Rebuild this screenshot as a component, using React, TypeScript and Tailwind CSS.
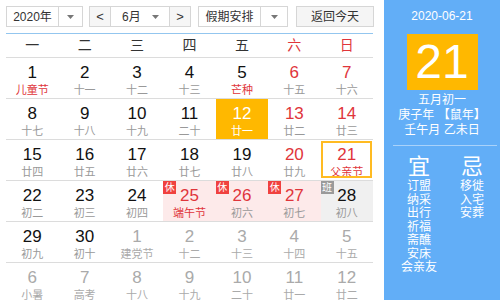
import React from "react";

type Cell = {
  d: string;
  l: string;
  red?: boolean;
  lred?: boolean;
  dim?: boolean;
  today?: boolean;
  sel?: boolean;
  badge?: "休" | "班";
  bg?: "pink" | "gray";
};

const rows: Cell[][] = [
  [
    { d: "1", l: "儿童节", lred: true },
    { d: "2", l: "十一" },
    { d: "3", l: "十二" },
    { d: "4", l: "十三" },
    { d: "5", l: "芒种", lred: true },
    { d: "6", l: "十五", red: true },
    { d: "7", l: "十六", red: true },
  ],
  [
    { d: "8", l: "十七" },
    { d: "9", l: "十八" },
    { d: "10", l: "十九" },
    { d: "11", l: "二十" },
    { d: "12", l: "廿一", today: true },
    { d: "13", l: "廿二", red: true },
    { d: "14", l: "廿三", red: true },
  ],
  [
    { d: "15", l: "廿四" },
    { d: "16", l: "廿五" },
    { d: "17", l: "廿六" },
    { d: "18", l: "廿七" },
    { d: "19", l: "廿八" },
    { d: "20", l: "廿九", red: true },
    { d: "21", l: "父亲节", red: true, lred: true, sel: true },
  ],
  [
    { d: "22", l: "初二" },
    { d: "23", l: "初三" },
    { d: "24", l: "初四" },
    { d: "25", l: "端午节", red: true, lred: true, badge: "休", bg: "pink" },
    { d: "26", l: "初六", red: true, badge: "休", bg: "pink" },
    { d: "27", l: "初七", red: true, badge: "休", bg: "pink" },
    { d: "28", l: "初八", badge: "班", bg: "gray" },
  ],
  [
    { d: "29", l: "初九" },
    { d: "30", l: "初十" },
    { d: "1", l: "建党节", dim: true },
    { d: "2", l: "十二", dim: true },
    { d: "3", l: "十三", dim: true },
    { d: "4", l: "十四", dim: true },
    { d: "5", l: "十五", dim: true },
  ],
  [
    { d: "6", l: "小暑", dim: true },
    { d: "7", l: "高考", dim: true },
    { d: "8", l: "十八", dim: true },
    { d: "9", l: "十九", dim: true },
    { d: "10", l: "二十", dim: true },
    { d: "11", l: "廿一", dim: true },
    { d: "12", l: "廿二", dim: true },
  ],
];

const weekdays = ["一", "二", "三", "四", "五", "六", "日"];

function Arrow() {
  return (
    <svg width="7" height="4" viewBox="0 0 7 4">
      <path d="M0 0 L7 0 L3.5 4 Z" fill="#777" />
    </svg>
  );
}

function DayCell({ c }: { c: Cell }) {
  let numColor = "text-[#111]";
  let lunColor = "text-[#999]";
  if (c.red) numColor = "text-[#e0353b]";
  if (c.lred) lunColor = "text-[#e0353b]";
  if (c.dim) {
    numColor = "text-[#aaa]";
    lunColor = "text-[#aaa]";
  }
  let bg = "";
  if (c.today) {
    bg = "bg-[#ffb800]";
    numColor = "text-white";
    lunColor = "text-white";
  }
  if (c.bg === "pink") bg = "bg-[#fdeaea]";
  if (c.bg === "gray") bg = "bg-[#f0f0f0]";
  return (
    <div className={`relative h-[40px] flex flex-col items-center ${bg}`}>
      {c.sel && (
        <div className="absolute left-0 right-[1px] top-[1px] bottom-[2px] border-2 border-[#ffbb22]" />
      )}
      {c.badge && (
        <div
          className={`absolute left-0 top-0 w-[13px] h-[13px] flex items-center justify-center text-[10px] leading-none text-white ${
            c.badge === "休" ? "bg-[#f0413f]" : "bg-[#9a9a9a]"
          }`}
        >
          {c.badge}
        </div>
      )}
      <div className={`mt-[6px] text-[17px] leading-[18px] ${numColor}`}>{c.d}</div>
      <div className={`mt-[2px] text-[11px] leading-[13px] ${lunColor}`}>{c.l}</div>
    </div>
  );
}

export default function App() {
  return (
    <div
      className="w-[500px] h-[300px] overflow-hidden bg-white flex"
      style={{ fontFamily: '"Liberation Sans", "Noto Sans CJK SC", sans-serif' }}
    >
      <div className="w-[384px] pl-[6px] pt-[6px]">
        {/* header */}
        <div className="flex items-center h-[21px] text-[12px] text-[#333]">
          <div className="flex h-[21px] w-[77px] border border-[#d6d6d6]">
            <div className="w-[52px] flex items-center justify-center border-r border-[#d6d6d6]">2020年</div>
            <div className="flex-1 flex items-center justify-center">
              <Arrow />
            </div>
          </div>
          <div className="ml-[6px] flex h-[21px] w-[102px] border border-[#d6d6d6]">
            <div className="w-[21px] flex items-center justify-center border-r border-[#d6d6d6] bg-[#f6f6f6] text-[13px]">&lt;</div>
            <div className="flex-1 flex items-center">
              <span className="ml-[11px]">6月</span>
              <span className="ml-auto mr-[10px] flex">
                <Arrow />
              </span>
            </div>
            <div className="w-[21px] flex items-center justify-center border-l border-[#d6d6d6] bg-[#f6f6f6] text-[13px]">&gt;</div>
          </div>
          <div className="ml-[7px] flex h-[21px] w-[90px] border border-[#d6d6d6]">
            <div className="w-[62px] flex items-center justify-center border-r border-[#d6d6d6]">假期安排</div>
            <div className="flex-1 flex items-center justify-center">
              <Arrow />
            </div>
          </div>
          <div className="ml-[8px] flex h-[21px] w-[78px] items-center justify-center border border-[#d6d6d6] bg-[#f5f5f5]">
            返回今天
          </div>
        </div>
        <div className="mt-[6px] w-[367px] h-[1px] bg-[#93c6ef]" />
        {/* weekdays */}
        <div className="grid grid-cols-7 w-[367px] h-[24px] border-b border-[#dcdcdc] text-[14px]">
          {weekdays.map((w, i) => (
            <div
              key={w}
              className={`flex items-center justify-center ${i >= 5 ? "text-[#e0353b]" : "text-[#333]"}`}
            >
              {w}
            </div>
          ))}
        </div>
        {rows.map((r, ri) => (
          <div key={ri} className="grid grid-cols-7 w-[367px] border-b border-[#dcdcdc]">
            {r.map((c, ci) => (
              <DayCell key={ci} c={c} />
            ))}
          </div>
        ))}
      </div>
      <div className="w-[116px] h-[300px] bg-[#62aef7] text-white flex flex-col items-center">
        <div className="mt-[9px] text-[12px] leading-[14px]">2020-06-21</div>
        <div className="mt-[11px] w-[71px] h-[56px] bg-[#ffb800] flex items-center justify-center text-[48px] leading-none">
          21
        </div>
        <div className="mt-[3px] text-[12px] leading-[15px] flex flex-col items-center">
          <div>五月初一</div>
          <div>庚子年 【鼠年】</div>
          <div>壬午月 乙未日</div>
        </div>
        <div className="mt-[7px] ml-[6px] w-[104px] h-[1px] bg-[#a9d2fa]" />
        <div className="mt-[8px] flex w-full text-[12px]">
          <div className="w-[70px] flex flex-col items-center">
            <div className="text-[22px] leading-[26px]">宜</div>
            <div className="leading-[13.5px] flex flex-col items-center">
              <div>订盟</div>
              <div>纳采</div>
              <div>出行</div>
              <div>祈福</div>
              <div>斋醮</div>
              <div>安床</div>
              <div>会亲友</div>
            </div>
          </div>
          <div className="w-[36px] flex flex-col items-center">
            <div className="text-[22px] leading-[26px]">忌</div>
            <div className="leading-[13.5px] flex flex-col items-center">
              <div>移徙</div>
              <div>入宅</div>
              <div>安葬</div>
            </div>
          </div>
        </div>
      </div>
    </div>
  );
}
